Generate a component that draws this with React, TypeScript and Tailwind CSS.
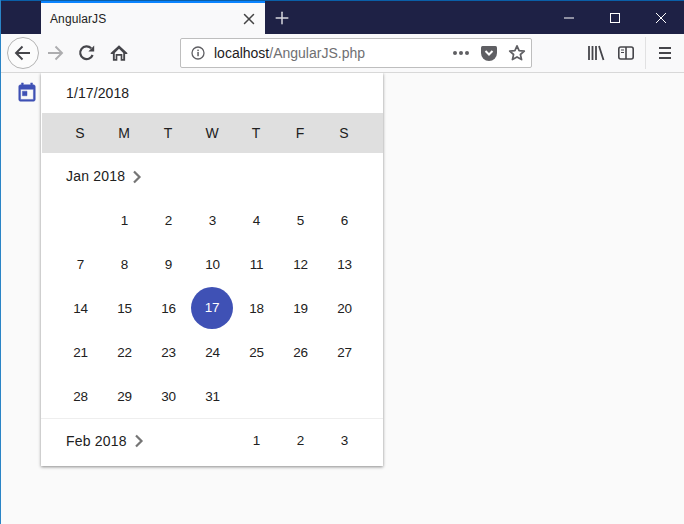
import { X, Plus } from "lucide-react";

const weekDays = ["S", "M", "T", "W", "T", "F", "S"];

const janWeeks: (number | null)[][] = [
  [null, 1, 2, 3, 4, 5, 6],
  [7, 8, 9, 10, 11, 12, 13],
  [14, 15, 16, 17, 18, 19, 20],
  [21, 22, 23, 24, 25, 26, 27],
  [28, 29, 30, 31, null, null, null],
];

const Chevron = () => (
  <svg width="10" height="14" viewBox="0 0 10 14" className="ml-[7px]">
    <path d="M2 1.5 L7.5 7 L2 12.5" fill="none" stroke="#757575" strokeWidth="2.2" />
  </svg>
);

const DayCell = ({ day }: { day: number | null }) => (
  <div className="w-[44px] h-[44px] flex items-center justify-center">
    {day === 17 ? (
      <div className="w-[42px] h-[42px] rounded-full bg-[#3f51b5] text-white flex items-center justify-center">{day}</div>
    ) : (
      <span className="pt-[2px] pl-[1px]">{day}</span>
    )}
  </div>
);

const Toolbar = () => (
  <div className="h-[39px] bg-[#f9f9fa] border-b border-[#d8d8d8] flex items-center relative">
    {/* back / forward / reload / home */}
    <div className="w-[32px] h-[32px] ml-[6px] rounded-full border border-[#b4b4b4] bg-[#fcfcfc] flex items-center justify-center">
      <svg width="18" height="18" viewBox="0 0 18 18">
        <path d="M16 9 H2.5 M8.5 2.5 L2 9 L8.5 15.5" fill="none" stroke="#45454a" strokeWidth="1.9" />
      </svg>
    </div>
    <svg width="18" height="18" viewBox="0 0 18 18" className="ml-[7px]">
      <path d="M2 9 H15.5 M9.5 2.5 L16 9 L9.5 15.5" fill="none" stroke="#adadaf" strokeWidth="1.9" />
    </svg>
    <svg width="18" height="18" viewBox="0 0 18 18" className="ml-[14px]">
      <path d="M14.6 11 A6.4 6.4 0 1 1 13.2 4.2" fill="none" stroke="#45454a" strokeWidth="2.2" />
      <path d="M10.4 7.4 H16.2 V1.6 Z" fill="#45454a" />
    </svg>
    <svg width="20" height="20" viewBox="0 0 18 18" className="ml-[13px]">
      <path d="M9 2 L1.5 9 V10 H3.5 V16 H7.5 V11.5 H10.5 V16 H14.5 V10 H16.5 V9 Z M5.2 9 L9 5.2 L12.8 9 V14.4 H12 V10 H6 V14.4 H5.2 Z" fill="#45454a" fillRule="evenodd" />
    </svg>
    {/* url bar */}
    <div className="ml-[51px] w-[352px] h-[30px] bg-white border border-[#bebebe] rounded-[2px] flex items-center pl-[9px] pr-[5px]">
      <svg width="16" height="16" viewBox="0 0 16 16">
        <circle cx="8" cy="8" r="6" fill="none" stroke="#5f5f63" strokeWidth="1.3" />
        <rect x="7.3" y="7" width="1.5" height="4.2" fill="#5f5f63" />
        <rect x="7.3" y="4.6" width="1.5" height="1.5" fill="#5f5f63" />
      </svg>
      <span className="ml-[8px] text-[14px] leading-[18px] text-[#1c1b22]">
        localhost<span className="text-[#6f6f72]">/AngularJS.php</span>
      </span>
      <div className="ml-auto flex items-center gap-[2px]">
        <span className="w-[4px] h-[4px] rounded-full bg-[#5f5f63]" />
        <span className="w-[4px] h-[4px] rounded-full bg-[#5f5f63]" />
        <span className="w-[4px] h-[4px] rounded-full bg-[#5f5f63]" />
      </div>
      <svg width="18" height="18" viewBox="0 0 18 18" className="ml-[11px]">
        <path d="M2.5 2 H15.5 Q17 2 17 3.5 V9 A8 8 0 0 1 1 9 V3.5 Q1 2 2.5 2 Z" fill="#5f5f63" />
        <path d="M5.5 7 L9 10.5 L12.5 7" fill="none" stroke="#ffffff" strokeWidth="2" />
      </svg>
      <svg width="18" height="18" viewBox="0 0 18 18" className="ml-[10px]">
        <path d="M9 1.8 L11.1 6.6 L16.3 7.1 L12.4 10.5 L13.6 15.6 L9 12.9 L4.4 15.6 L5.6 10.5 L1.7 7.1 L6.9 6.6 Z" fill="none" stroke="#5f5f63" strokeWidth="1.7" strokeLinejoin="round" />
      </svg>
    </div>
    {/* library / sidebar / menu */}
    <svg width="18" height="18" viewBox="0 0 18 18" className="ml-[55px]">
      <path d="M2 2 V16 M5.5 2 V16 M9 2 V16 M12 2 L16.5 16" fill="none" stroke="#45454a" strokeWidth="1.8" />
    </svg>
    <svg width="18" height="18" viewBox="0 0 18 18" className="ml-[12px]">
      <rect x="1.8" y="3" width="14.4" height="12" rx="2" fill="none" stroke="#45454a" strokeWidth="1.6" />
      <path d="M9 3 V15" stroke="#45454a" strokeWidth="1.6" />
      <path d="M4 6 H7 M4 8.5 H7" stroke="#45454a" strokeWidth="1.2" />
    </svg>
    <div className="ml-[10px] w-px h-[32px] bg-[#e1e1e2]" />
    <svg width="16" height="16" viewBox="0 0 16 16" className="ml-[11px]">
      <path d="M2 3 H14 M2 8 H14 M2 13 H14" stroke="#45454a" strokeWidth="2" />
    </svg>
  </div>
);

export default function App() {
  return (
    <div className="w-[684px] h-[524px] overflow-hidden bg-[#fafafa] border-l border-[#2a84c6] flex flex-col font-['Liberation_Sans',Arial,sans-serif]">
      {/* title bar */}
      <div className="h-[34px] shrink-0 bg-[#1e2145] border-t border-[#0a5fa8] flex">
        <div className="w-[40px]" />
        <div className="w-[224px] bg-[#f9f9fa] border-t-2 border-[#0a84ff] flex items-center pl-[9px] pr-[7px] text-[#222] text-[12px]">
          <span className="tracking-[0.1px]">AngularJS</span>
          <X size={18} strokeWidth={2} className="ml-auto text-[#444]" />
        </div>
        <div className="w-[34px] flex items-center justify-center">
          <Plus size={20} strokeWidth={1.8} className="text-[#d6d6de]" />
        </div>
        <div className="ml-auto flex items-center text-white">
          <div className="w-[46px] flex justify-center">
            <svg width="12" height="12" viewBox="0 0 12 12"><path d="M1 6 H11" stroke="#fff" /></svg>
          </div>
          <div className="w-[46px] flex justify-center">
            <svg width="12" height="12" viewBox="0 0 12 12"><rect x="1.5" y="1.5" width="9" height="9" fill="none" stroke="#fff" /></svg>
          </div>
          <div className="w-[46px] flex justify-center">
            <svg width="12" height="12" viewBox="0 0 12 12"><path d="M1 1 L11 11 M11 1 L1 11" stroke="#fff" /></svg>
          </div>
        </div>
      </div>

      <Toolbar />

      {/* page */}
      <div className="flex flex-1 items-start">
        <div className="w-[40px] shrink-0 pt-[9px] pl-[15px]">
          <svg width="22" height="22" viewBox="0 0 24 24" fill="#3f51b5">
            <path d="M19 3h-1V1h-2v2H8V1H6v2H5c-1.11 0-2 .9-2 2v14c0 1.1.89 2 2 2h14c1.1 0 2-.9 2-2V5c0-1.1-.9-2-2-2zm0 16H5V8h14v11zM7 10h5v5H7z" stroke="#3f51b5" strokeWidth="0.5" />
          </svg>
        </div>

        {/* calendar popup */}
        <div className="w-[342px] h-[393px] bg-white shadow-[0_1px_3px_rgba(0,0,0,0.45)] text-[14px] text-[#212121] flex flex-col">
          <div className="h-[40px] flex items-center pl-[25px] tracking-[0.1px]">1/17/2018</div>
          <div className="h-[40px] bg-[#dfdfdf] ml-px flex items-center pl-[16px]">
            {weekDays.map((d, i) => (
              <div key={i} className="w-[44px] text-center">{d}</div>
            ))}
          </div>
          <div className="h-[45px] flex items-center pl-[25px] pt-[2px] tracking-[0.2px]">
            Jan 2018
            <Chevron />
          </div>
          <div className="pl-[17px] h-[220px] text-[13.5px] tracking-[-0.2px]">
            {janWeeks.map((week, i) => (
              <div key={i} className="flex">
                {week.map((day, j) => (
                  <DayCell key={j} day={day} />
                ))}
              </div>
            ))}
          </div>
          <div className="flex-1 border-t border-[#eeeeee] flex items-center pl-[25px] pb-[3px] tracking-[0.2px]">
            Feb 2018
            <Chevron />
            <div className="ml-auto flex pr-[16.5px] text-[13.5px] tracking-[-0.2px]">
              {[1, 2, 3].map((d) => (
                <div key={d} className="w-[44px] text-center">{d}</div>
              ))}
            </div>
          </div>
        </div>
      </div>
    </div>
  );
}
